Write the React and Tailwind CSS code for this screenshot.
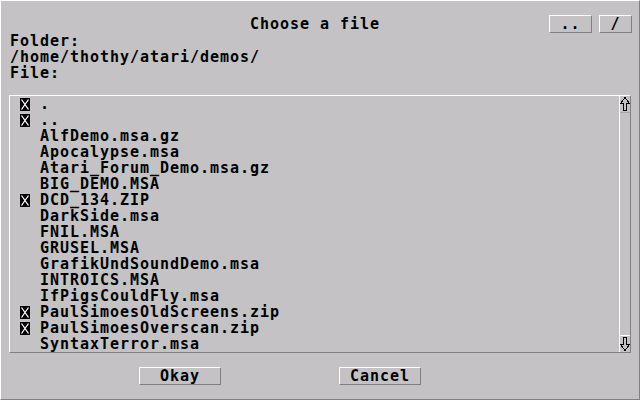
import React from 'react';

const files = [
    { name: '.', dir: true },
    { name: '..', dir: true },
    { name: 'AlfDemo.msa.gz' },
    { name: 'Apocalypse.msa' },
    { name: 'Atari_Forum_Demo.msa.gz' },
    { name: 'BIG_DEMO.MSA' },
    { name: 'DCD_134.ZIP', dir: true },
    { name: 'DarkSide.msa' },
    { name: 'FNIL.MSA' },
    { name: 'GRUSEL.MSA' },
    { name: 'GrafikUndSoundDemo.msa' },
    { name: 'INTROICS.MSA' },
    { name: 'IfPigsCouldFly.msa' },
    { name: 'PaulSimoesOldScreens.zip', dir: true },
    { name: 'PaulSimoesOverscan.zip', dir: true },
    { name: 'SyntaxTerror.msa' },
];

// raised box look used by buttons
const raised = 'border border-t-white border-l-white border-r-[#808080] border-b-[#808080]';

function FolderIcon() {
    return (
        <svg width="10" height="16" viewBox="0 0 10 16" className="block">
            <rect x="0" y="2" width="10" height="13" fill="#000" />
            <path d="M1.5 3.5 L8.5 13.5 M8.5 3.5 L1.5 13.5" stroke="#fff" strokeWidth="1.3" fill="none" />
        </svg>
    );
}

function Arrow({ down }) {
    return (
        <svg width="10" height="16" viewBox="0 0 10 16" className="block" style={down ? { transform: 'scaleY(-1)' } : undefined}>
            <path d="M5 1.5 L9.5 7.5 L6.5 7.5 L6.5 14.5 L3.5 14.5 L3.5 7.5 L0.5 7.5 Z" stroke="#000" strokeWidth="1" fill="none" shapeRendering="crispEdges" />
        </svg>
    );
}

function Button({ children, className = '' }) {
    return (
        <div className={`${raised} h-[18px] flex items-center justify-center leading-[16px] ${className}`}>
            {children}
        </div>
    );
}

export default function App() {
    return (
        <div
            className="w-[640px] h-[400px] bg-[#c4c2c4] text-black border border-t-white border-l-white border-r-[#808080] border-b-[#808080] flex flex-col text-[15px] font-bold leading-[16px] tracking-[0.97px] whitespace-pre overflow-hidden"
            style={{ fontFamily: '"DejaVu Sans Mono", "Liberation Mono", monospace' }}
        >
            {/* titre + boutons */}
            <div className="flex h-[18px] mt-[14px]">
                <span className="ml-[249px] mt-[1px] h-[16px]">Choose a file</span>
                <Button className="ml-[169px] w-[43px]">..</Button>
                <Button className="ml-[7px] w-[33px]">/</Button>
            </div>

            <div className="ml-[9px] h-[16px]">Folder:</div>
            <div className="ml-[9px] h-[16px]">/home/thothy/atari/demos/</div>
            <div className="ml-[9px] h-[16px]">File:</div>

            {/* liste */}
            <div className="mt-[14px] ml-[8px] w-[622px] h-[258px] flex border border-t-white border-l-white border-r-[#808080] border-b-[#808080]">
                <div className="flex-1 flex flex-col">
                    {files.map((f, i) => (
                        <div key={i} className="h-[16px] flex pl-[10px]">
                            <div className="w-[10px]">{f.dir && <FolderIcon />}</div>
                            <span className="ml-[10px]">{f.name}</span>
                        </div>
                    ))}
                </div>
                <div className="w-[11px] border-l border-white flex flex-col">
                    <div className="h-[17px] border-b border-[#a8a6a8]"><Arrow /></div>
                    <div className="flex-1" />
                    <div className="h-[17px] border-t border-white"><Arrow down /></div>
                </div>
            </div>

            <div className="flex mt-[14px]">
                <Button className="ml-[138px] w-[82px]">Okay</Button>
                <Button className="ml-[118px] w-[82px]">Cancel</Button>
            </div>
        </div>
    );
}
